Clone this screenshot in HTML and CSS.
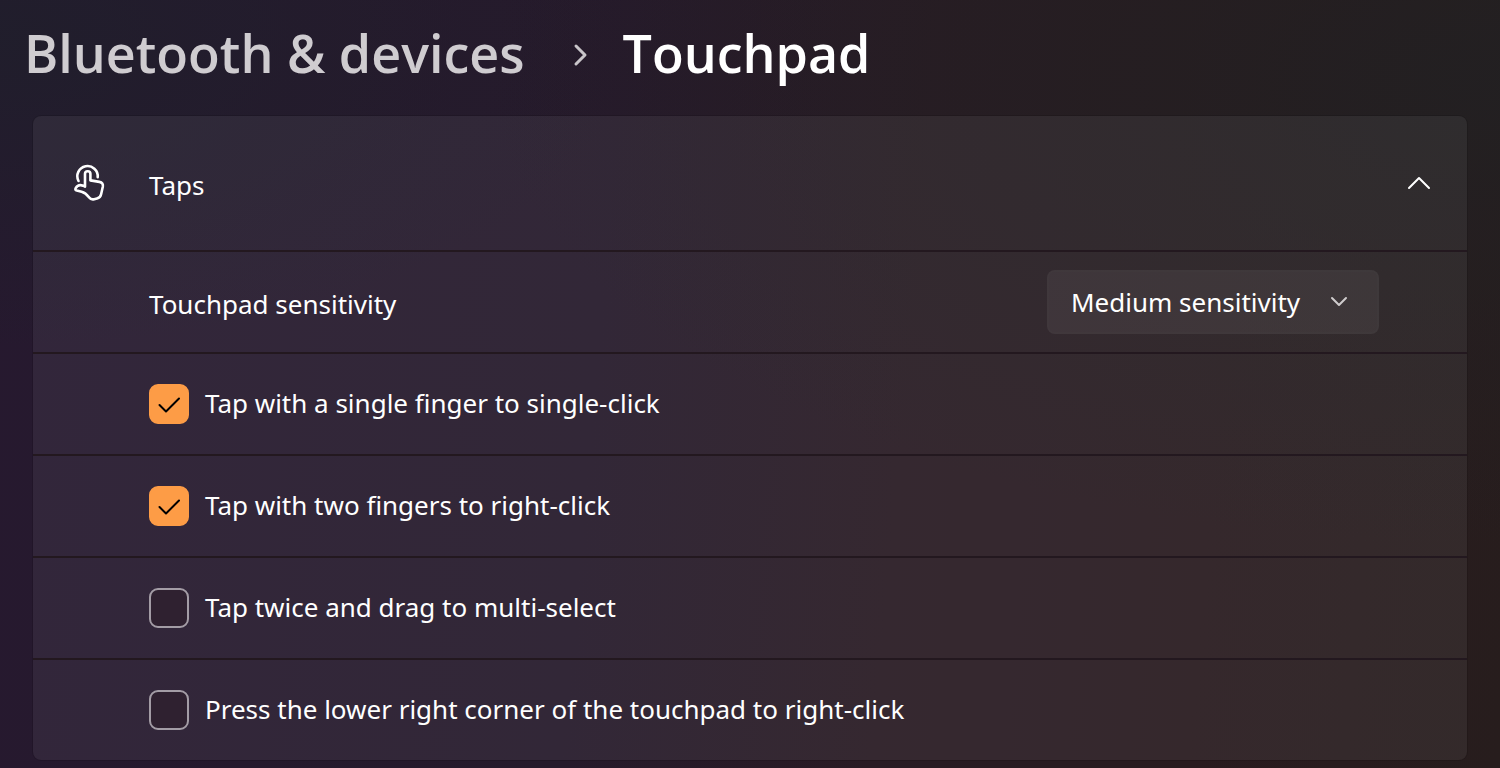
FILE: index.html
```
<!DOCTYPE html>
<html lang="en">
<head>
<meta charset="utf-8">
<title>Touchpad</title>
<link rel="stylesheet" href="styles.css">
</head>
<body>
<header>
  <nav class="breadcrumb" aria-label="Breadcrumb">
    <a class="crumb" href="#">Bluetooth &amp; devices</a>
    <svg class="crumb-chevron" viewBox="0 0 16 26" aria-hidden="true"><path d="M3 4 L12 13 L3 22"/></svg>
    <h1 class="current">Touchpad</h1>
  </nav>
</header>
<main class="card">
  <button class="card-header" type="button" aria-expanded="true">
    <svg class="tap-icon" viewBox="0 0 40 40" aria-hidden="true">
      <path d="M9.500 18 A10.200 10.200 0 1 1 28.700 14.200"/>
      <path d="M16 23.600 V10.800 C16 7.400 21.400 7.400 21.400 10.800 V17.400 L30.400 18.900 C33.200 19.400 34.300 21.200 33.800 23.700 L32.100 31.200 C31.600 33.600 30.300 34.900 28 35.500 L25.200 36.200 C23 36.700 21.400 36.200 20.200 34.500 C17.400 30.800 15.800 29.500 12.600 28.700 L7.800 27.500 C6.400 27.100 6 26.300 6.700 25.100 C8.500 22.100 11.200 21.500 14.100 22.700 Z"/>
    </svg>
    <span class="header-label">Taps</span>
    <svg class="expand-icon" viewBox="0 0 24 14" aria-hidden="true"><path d="M2 12 L12 2 L22 12"/></svg>
  </button>
  <div class="row">
    <label class="row-label" for="sensitivity">Touchpad sensitivity</label>
    <div class="select-box">
      <select id="sensitivity">
        <option>Low sensitivity</option>
        <option selected>Medium sensitivity</option>
        <option>High sensitivity</option>
      </select>
      <svg class="select-icon" viewBox="0 0 18 12" aria-hidden="true"><path d="M2 2 L9 9 L16 2"/></svg>
    </div>
  </div>
  <div class="row">
    <label class="option"><span class="box"><input type="checkbox" checked><svg viewBox="0 0 40 40" aria-hidden="true"><path d="M10.500 21 L17 27.500 L30 14.500"/></svg></span><span class="option-text">Tap with a single finger to single-click</span></label>
  </div>
  <div class="row">
    <label class="option"><span class="box"><input type="checkbox" checked><svg viewBox="0 0 40 40" aria-hidden="true"><path d="M10.500 21 L17 27.500 L30 14.500"/></svg></span><span class="option-text">Tap with two fingers to right-click</span></label>
  </div>
  <div class="row">
    <label class="option"><span class="box"><input type="checkbox"></span><span class="option-text">Tap twice and drag to multi-select</span></label>
  </div>
  <div class="row">
    <label class="option"><span class="box"><input type="checkbox"></span><span class="option-text">Press the lower right corner of the touchpad to right-click</span></label>
  </div>
</main>
</body>
</html>
```
FILE: styles.css
```
* { box-sizing: border-box; }

body {
  margin: 0;
  min-height: 100vh;
  padding-bottom: 8px;
  color: #fff;
  font: 26px/36px "Segoe UI", "Noto Sans", "Open Sans", sans-serif;
  background:
    radial-gradient(ellipse at 0% 5%, rgba(31, 31, 43, 0.8), transparent 30%),
    radial-gradient(ellipse at 100% 10%, rgba(34, 32, 34, 0.9), transparent 48%),
    linear-gradient(95deg, #26192f 0%, #261a2b 40%, #291b24 60%, #291b1f 80%, #271d1d 100%);
}

svg { fill: none; stroke: currentColor; stroke-linecap: round; stroke-linejoin: round; }

.breadcrumb {
  display: flex;
  align-items: center;
  height: 116px;
  padding: 0 24px 10px;
  font: 600 52px/72px "Segoe UI", "Open Sans", "Noto Sans", sans-serif;
}
.crumb { color: #cfccd0; text-decoration: none; }
.crumb-chevron { width: 16px; height: 26px; margin: 4px 34px 0 48px; color: #c9c6ca; stroke-width: 3; }
.current { margin: 0; font: inherit; }

.card {
  margin: 0 33px;
  border-radius: 8px;
  overflow: hidden;
  background: rgba(255, 255, 255, 0.06);
  box-shadow: 0 0 0 1px rgba(0, 0, 0, 0.12);
}
.card-header {
  display: flex;
  align-items: center;
  width: 100%;
  height: 134px;
  padding: 0 36px;
  border: 0;
  background: none;
  color: inherit;
  font: inherit;
  text-align: left;
}
.tap-icon { width: 40px; height: 40px; stroke-width: 2.6; }
.header-label { flex: 1; padding: 4px 0 0 40px; }
.expand-icon { width: 24px; height: 14px; stroke-width: 2; }

.row {
  display: flex;
  align-items: center;
  justify-content: space-between;
  min-height: 102px;
  padding: 0 88px 0 116px;
  border-top: 2px solid #23181f;
}
.row-label { padding-top: 4px; }

.select-box { position: relative; }
select {
  appearance: none;
  width: 332px;
  height: 64px;
  padding: 0 64px 0 22px;
  border: 2px solid rgba(255, 255, 255, 0.01);
  border-radius: 8px;
  background: rgba(255, 255, 255, 0.06);
  color: inherit;
  font: inherit;
}
.select-icon {
  position: absolute;
  top: 26px;
  right: 31px;
  width: 18px;
  height: 12px;
  color: #cfcccd;
  stroke-width: 2;
  pointer-events: none;
}

.option { display: flex; align-items: center; gap: 16px; }
.option-text { padding-bottom: 2px; }
.box { position: relative; display: flex; width: 40px; height: 40px; }
.box input {
  appearance: none;
  width: 40px;
  height: 40px;
  margin: 0;
  border: 2px solid #a39ca5;
  border-radius: 9px;
  background: #2f2130;
}
.box input:checked { border-color: #fd9c46; background: #fd9c46; }
.box svg { position: absolute; inset: 0; color: #000; stroke-width: 2; pointer-events: none; }
```
